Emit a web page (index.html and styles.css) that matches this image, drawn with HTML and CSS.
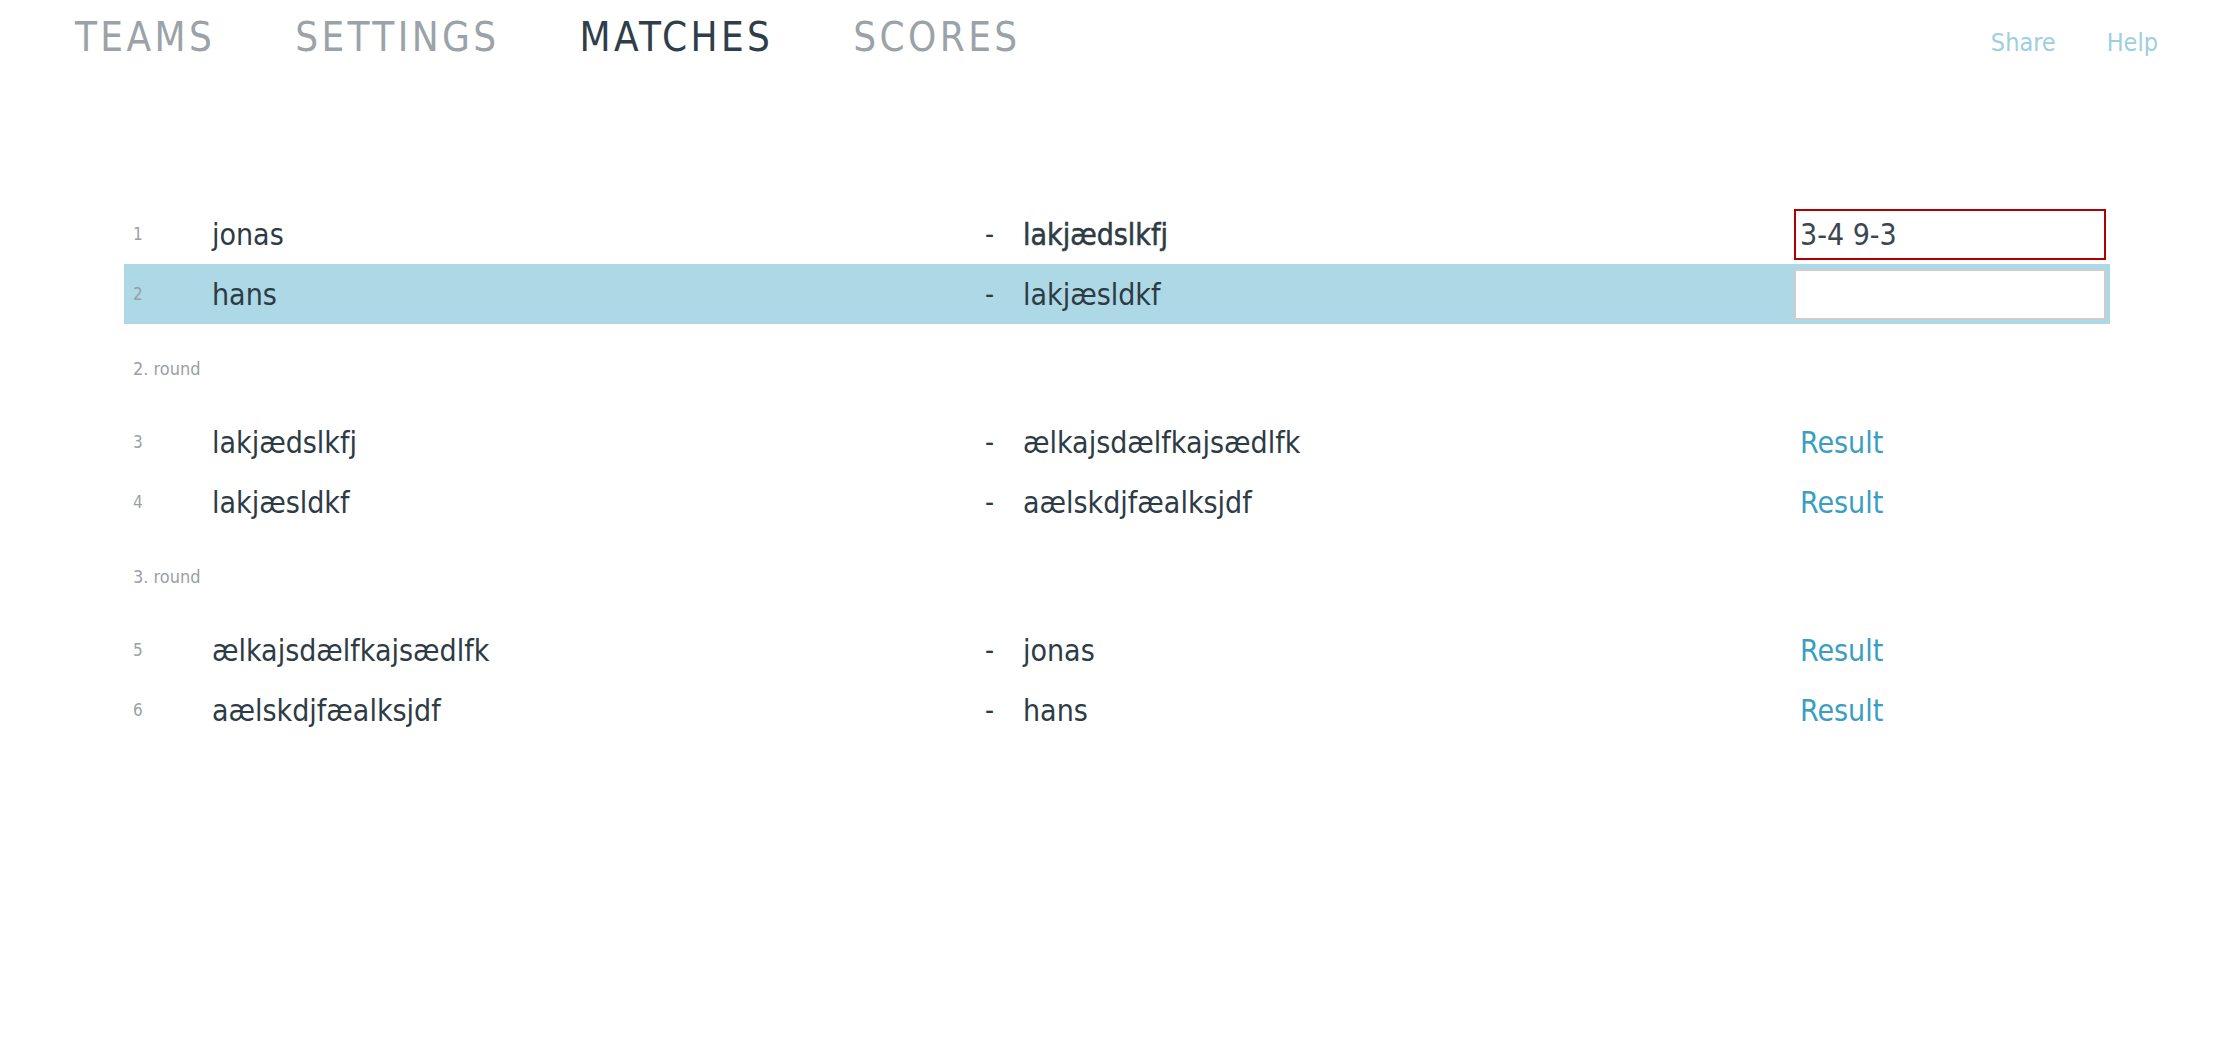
FILE: index.html
```html
<!DOCTYPE html>
<html lang="da">
<head>
<meta charset="utf-8">
<title>Matches</title>
<link rel="stylesheet" href="styles.css">
</head>
<body>
<header class="topbar">
  <nav class="tabs">
    <a class="tab" href="#">TEAMS</a>
    <a class="tab" href="#">SETTINGS</a>
    <a class="tab active" href="#">MATCHES</a>
    <a class="tab" href="#">SCORES</a>
  </nav>
  <div class="links">
    <a class="link" href="#">Share</a>
    <a class="link" href="#">Help</a>
  </div>
</header>

<main class="matches">
  <div class="match">
    <span class="num">1</span>
    <span class="team">jonas</span>
    <span class="dash">-</span>
    <span class="team winner">lakjædslkfj</span>
    <span class="res"><input class="score invalid" type="text" value="3-4 9-3"></span>
  </div>
  <div class="match selected">
    <span class="num">2</span>
    <span class="team">hans</span>
    <span class="dash">-</span>
    <span class="team">lakjæsldkf</span>
    <span class="res"><input class="score" type="text" value=""></span>
  </div>

  <div class="round">2. round</div>

  <div class="match">
    <span class="num">3</span>
    <span class="team">lakjædslkfj</span>
    <span class="dash">-</span>
    <span class="team">ælkajsdælfkajsædlfk</span>
    <span class="res"><a class="result" href="#">Result</a></span>
  </div>
  <div class="match">
    <span class="num">4</span>
    <span class="team">lakjæsldkf</span>
    <span class="dash">-</span>
    <span class="team">aælskdjfæalksjdf</span>
    <span class="res"><a class="result" href="#">Result</a></span>
  </div>

  <div class="round">3. round</div>

  <div class="match">
    <span class="num">5</span>
    <span class="team">ælkajsdælfkajsædlfk</span>
    <span class="dash">-</span>
    <span class="team">jonas</span>
    <span class="res"><a class="result" href="#">Result</a></span>
  </div>
  <div class="match">
    <span class="num">6</span>
    <span class="team">aælskdjfæalksjdf</span>
    <span class="dash">-</span>
    <span class="team">hans</span>
    <span class="res"><a class="result" href="#">Result</a></span>
  </div>
</main>
</body>
</html>
```

FILE: styles.css
```css
html, body {
  margin: 0;
  padding: 0;
  background: #ffffff;
}

body {
  font-family: "DejaVu Sans Condensed", "Liberation Sans", sans-serif;
  color: #2d3b45;
}

a {
  text-decoration: none;
}

.topbar {
  display: flex;
  justify-content: space-between;
  align-items: baseline;
  padding: 17px 58px 0 75px;
}

.tabs {
  display: flex;
  align-items: baseline;
  gap: 80px;
}

.tab {
  font-size: 40px;
  line-height: 40px;
  letter-spacing: 3.4px;
  color: #9ba3a8;
}

.tab.active {
  color: #2f3e48;
}

.links {
  display: flex;
  align-items: baseline;
  gap: 51px;
}

.link {
  font-size: 25px;
  line-height: 40px;
  color: #9dcfe0;
}

.matches {
  margin: 141px 106px 0 124px;
}

.match {
  display: grid;
  grid-template-columns: 88px 773px 38px 771px 316px;
  align-items: center;
  height: 60px;
}

.match.selected {
  background: #add8e6;
}

.num {
  padding-left: 9px;
  font-size: 17px;
  color: #9aa0a5;
}

.team {
  font-size: 30px;
  color: #2d3b45;
  white-space: nowrap;
}

.team.winner {
  -webkit-text-stroke: 0.5px #2d3b45;
}

.dash {
  font-size: 28px;
  color: #2d3b45;
}

.res {
  display: flex;
  align-items: center;
}

.score {
  box-sizing: border-box;
  width: 312px;
  height: 51px;
  margin: 0;
  padding: 0 4px;
  border: 2px solid #cdcdcd;
  background: #ffffff;
  font-family: inherit;
  font-size: 30px;
  color: #3a4750;
  outline: none;
}

.score.invalid {
  border-color: #b00000;
}

.result {
  padding-left: 6px;
  font-size: 30px;
  color: #3a9ec2;
}

.round {
  display: flex;
  align-items: center;
  height: 88px;
  padding-left: 9px;
  font-size: 18px;
  color: #9aa0a5;
}
```
